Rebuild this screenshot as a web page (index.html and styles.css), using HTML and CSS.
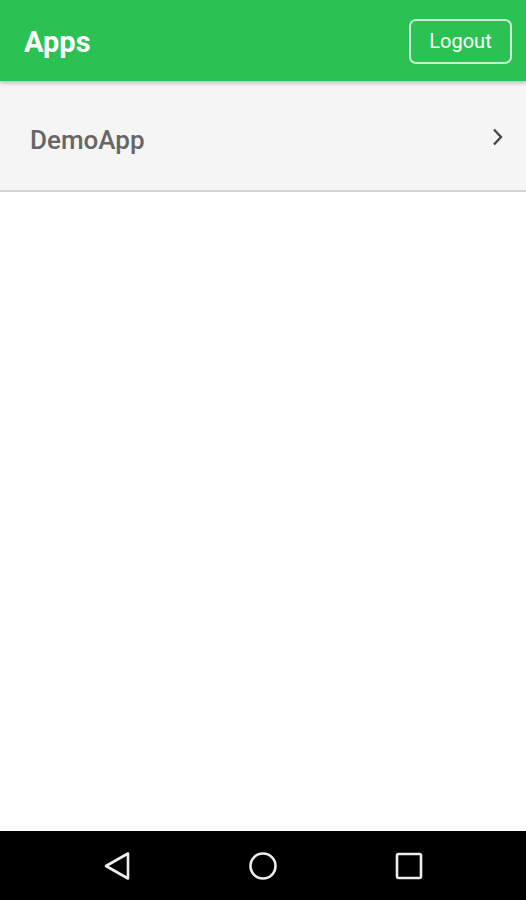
FILE: index.html
```html
<!DOCTYPE html>
<html lang="en">
<head>
    <meta charset="UTF-8">
    <meta name="viewport" content="width=device-width, initial-scale=1.0">
    <title>Apps</title>
    <link rel="stylesheet" href="styles.css">
</head>
<body>
    <div class="screen">
        <header class="toolbar">
            <h1>Apps</h1>
            <button class="logout">Logout</button>
        </header>

        <main class="content">
            <ul class="app-list">
                <li class="app-item">
                    <span>DemoApp</span>
                    <svg class="chevron" width="14" height="18" viewBox="0 0 14 18">
                        <path d="M3 1.5 L10 9 L3 16.5" fill="none" stroke="#484848" stroke-width="2.4"/>
                    </svg>
                </li>
            </ul>
        </main>

        <nav class="navbar">
            <svg width="28" height="30" viewBox="0 0 28 30">
                <path d="M25 2.5 L25 27.5 L3 15 Z" fill="none" stroke="#eee" stroke-width="2.6" stroke-linejoin="round"/>
            </svg>
            <svg width="30" height="30" viewBox="0 0 30 30">
                <circle cx="15" cy="15" r="12.5" fill="none" stroke="#eee" stroke-width="2.6"/>
            </svg>
            <svg width="28" height="28" viewBox="0 0 28 28">
                <rect x="2" y="2" width="24" height="24" rx="1.5" fill="none" stroke="#eee" stroke-width="2.6"/>
            </svg>
        </nav>
    </div>
</body>
</html>
```

FILE: styles.css
```css
body {
    margin: 0;
    padding: 0;
    font-family: Roboto, "Noto Sans", sans-serif;
    background-color: #fff;
}
.screen {
    display: flex;
    flex-direction: column;
    height: 900px;
}
.toolbar {
    height: 81px;
    background-color: #2bc253;
    display: flex;
    align-items: center;
    justify-content: space-between;
    padding: 0 14px 0 24px;
    box-shadow: 0 2px 4px rgba(0, 0, 0, 0.25);
    position: relative;
    z-index: 1;
}
.toolbar h1 {
    margin: 2px 0 0 0;
    color: #fff;
    font-size: 29px;
    font-weight: 700;
}
.logout {
    width: 103px;
    height: 45px;
    margin-top: 1px;
    background: transparent;
    border: 2px solid rgba(255, 255, 255, 0.75);
    border-radius: 7px;
    color: #fff;
    font-family: Roboto, "Noto Sans", sans-serif;
    font-size: 20px;
    padding: 0;
}
.content {
    flex: 1;
}
.app-list {
    list-style: none;
    margin: 0;
    padding: 0;
}
.app-item {
    height: 101px;
    background-color: #f5f5f5;
    border-bottom: 2px solid #d4d4d4;
    display: flex;
    align-items: center;
    justify-content: space-between;
    padding: 8px 21px 0 30px;
    color: #666;
    font-size: 26px;
    font-weight: 500;
}
.chevron {
    margin-top: -6px;
}
.navbar {
    height: 69px;
    background-color: #000;
    display: flex;
    align-items: center;
    justify-content: center;
    gap: 117px;
}
```
